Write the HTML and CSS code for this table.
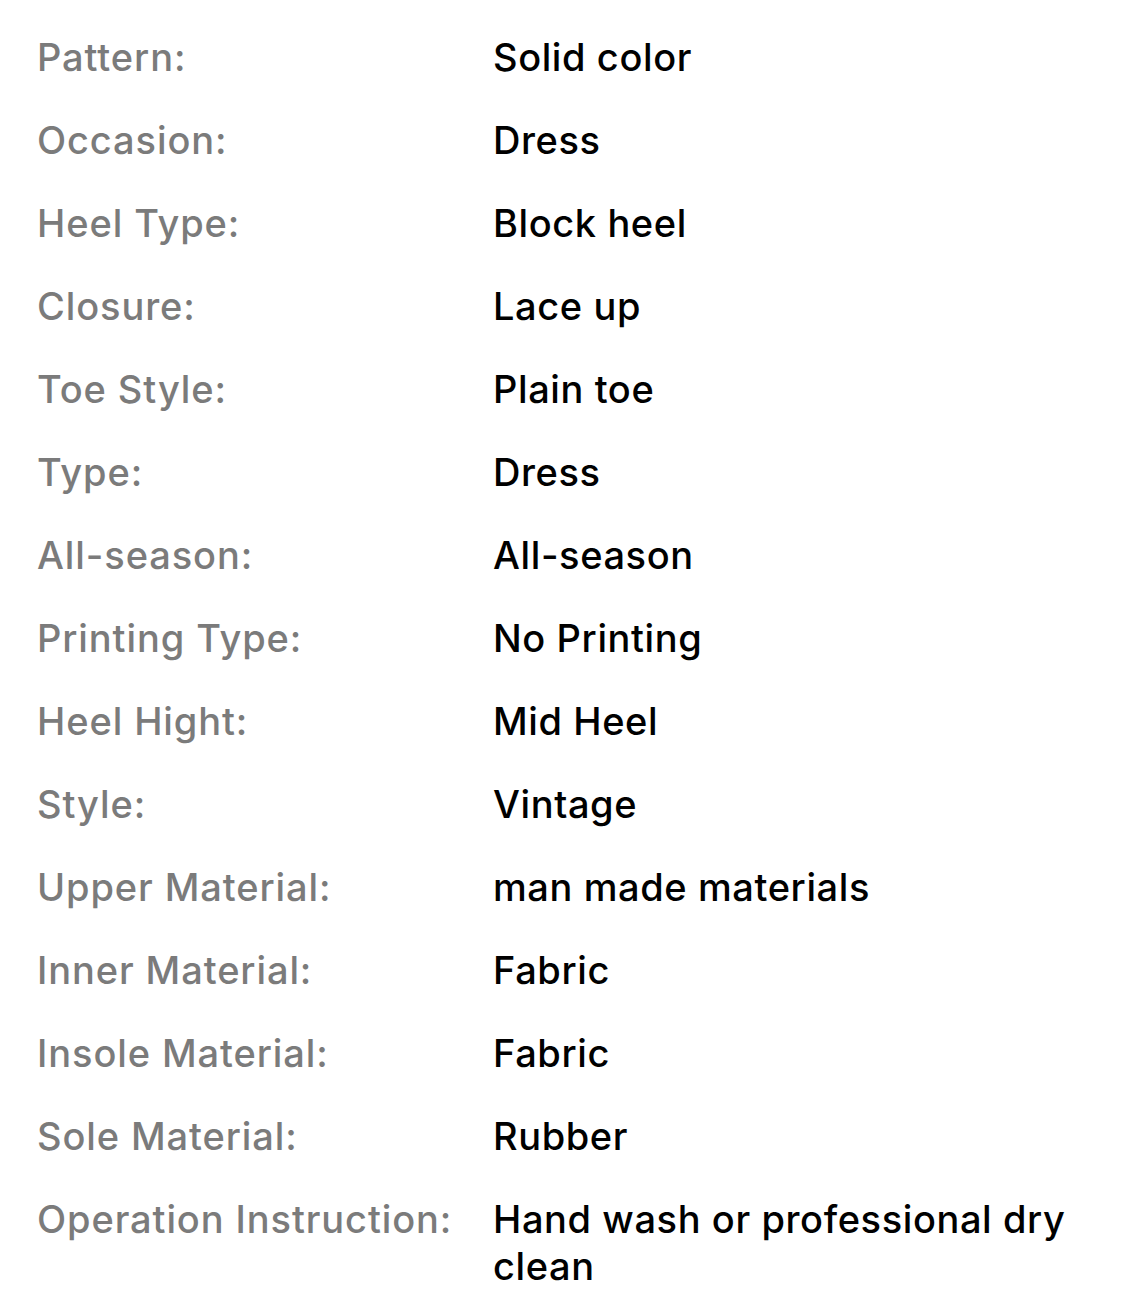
FILE: index.html
```html
<!DOCTYPE html>
<html>
<head>
<meta charset="utf-8">
<link rel="stylesheet" href="styles.css">
</head>
<body>
<dl class="specs">
  <div class="row"><dt>Pattern:</dt><dd>Solid color</dd></div>
  <div class="row"><dt>Occasion:</dt><dd>Dress</dd></div>
  <div class="row"><dt>Heel Type:</dt><dd>Block heel</dd></div>
  <div class="row"><dt>Closure:</dt><dd>Lace up</dd></div>
  <div class="row"><dt>Toe Style:</dt><dd>Plain toe</dd></div>
  <div class="row"><dt>Type:</dt><dd>Dress</dd></div>
  <div class="row"><dt>All-season:</dt><dd>All-season</dd></div>
  <div class="row"><dt>Printing Type:</dt><dd>No Printing</dd></div>
  <div class="row"><dt>Heel Hight:</dt><dd>Mid Heel</dd></div>
  <div class="row"><dt>Style:</dt><dd>Vintage</dd></div>
  <div class="row"><dt>Upper Material:</dt><dd>man made materials</dd></div>
  <div class="row"><dt>Inner Material:</dt><dd>Fabric</dd></div>
  <div class="row"><dt>Insole Material:</dt><dd>Fabric</dd></div>
  <div class="row"><dt>Sole Material:</dt><dd>Rubber</dd></div>
  <div class="row"><dt>Operation Instruction:</dt><dd>Hand wash or professional dry clean</dd></div>
</dl>
</body>
</html>
```
FILE: styles.css
```css
html, body {
  margin: 0;
  padding: 0;
  background: #ffffff;
}
body {
  font-family: Inter, "Noto Sans", sans-serif;
  font-weight: 500;
  font-size: 38px;
  line-height: 47px;
}
.specs {
  margin: 0;
  padding: 34px 40px 0 37px;
  display: flex;
  flex-direction: column;
  gap: 36px;
}
.row {
  display: grid;
  grid-template-columns: 456px 1fr;
}
dt {
  color: #7b7b7b;
  margin: 0;
  letter-spacing: 0.9px;
}
dd {
  color: #000000;
  margin: 0;
  letter-spacing: 0.6px;
}
```
